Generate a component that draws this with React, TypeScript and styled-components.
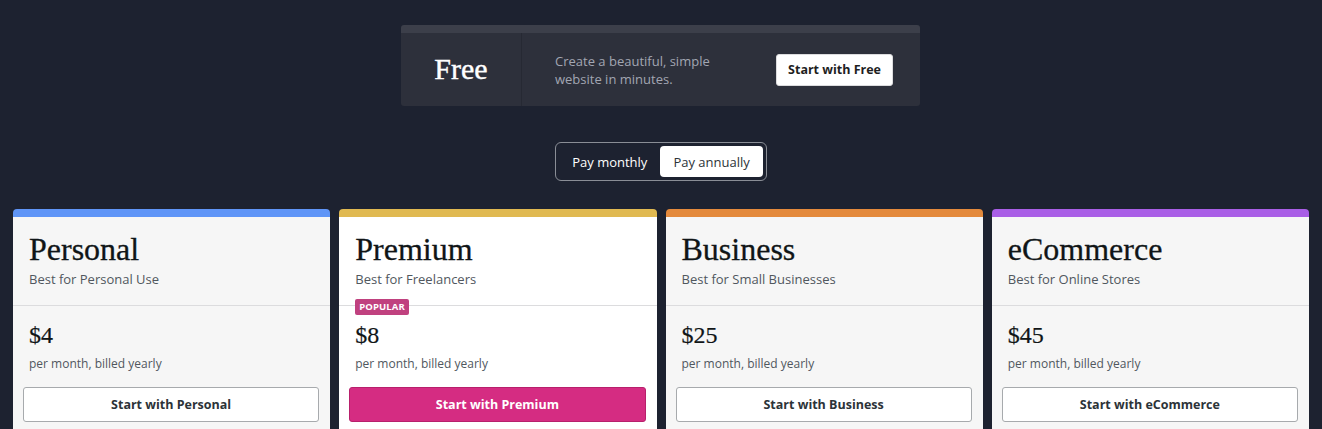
import React from "react";
import styled, { createGlobalStyle } from "styled-components";

const Global = createGlobalStyle`
  html, body { margin: 0; padding: 0; background: #1d2230; }
  body { font-family: "Open Sans", "Noto Sans", sans-serif; -webkit-font-smoothing: antialiased; }
  * { box-sizing: border-box; }
`;

const Page = styled.div`
  min-height: 429px;
  background: #1d2230;
  padding: 25px 13px 40px;
  display: flex;
  flex-direction: column;
  align-items: center;
`;

const FreeBanner = styled.div`
  width: 519px;
  height: 81px;
  margin-right: 1px;
  background: #2d303b;
  border-top: 8px solid #3c3f4a;
  border-radius: 3px;
  display: flex;
  align-items: stretch;
`;

const FreeName = styled.div`
  width: 121px;
  flex: 0 0 121px;
  border-right: 1px solid #262933;
  display: flex;
  align-items: center;
  justify-content: center;
  font-family: "Liberation Serif", "Times New Roman", serif;
  font-size: 30px;
  font-weight: 400;
  -webkit-text-stroke: 0.4px #ffffff;
  color: #ffffff;
  padding-bottom: 1px;
`;

const FreeBody = styled.div`
  flex: 1;
  display: flex;
  align-items: center;
  justify-content: space-between;
  padding: 0 27px 0 33px;
`;

const FreeText = styled.p`
  margin: 0;
  font-size: 13px;
  line-height: 18px;
  color: #a2a6b2;
`;

const LightButton = styled.button`
  height: 32px;
  padding: 0 11px;
  background: #ffffff;
  border: 1px solid #dcdcde;
  border-radius: 3px;
  font-family: "Open Sans", sans-serif;
  font-weight: 700;
  font-size: 12.5px;
  color: #1e1e1e;
  cursor: pointer;
`;

const Toggle = styled.div`
  margin-top: 36px;
  display: flex;
  padding: 3px;
  border: 1px solid #8a8e96;
  border-radius: 6px;
  height: 39px;
`;

const ToggleOption = styled.button<{ $active?: boolean }>`
  height: 31px;
  padding: 0 13px;
  border: none;
  border-radius: 4px;
  font-family: "Open Sans", sans-serif;
  font-size: 13px;
  background: ${(p) => (p.$active ? "#ffffff" : "transparent")};
  color: ${(p) => (p.$active ? "#2c3338" : "#ffffff")};
  cursor: pointer;
`;

const Cards = styled.div`
  margin-top: 28px;
  width: 100%;
  display: grid;
  grid-template-columns: repeat(4, 1fr);
  column-gap: 9px;
`;

const Card = styled.div<{ $accent: string; $featured?: boolean }>`
  background: ${(p) => (p.$featured ? "#ffffff" : "#f6f6f6")};
  border-top: 8px solid ${(p) => p.$accent};
  border-radius: 4px;
  display: flex;
  flex-direction: column;
`;

const CardHead = styled.div`
  padding: 13px 16px 17px;
  border-bottom: 1px solid #dcdcde;
  position: relative;
`;

const PlanName = styled.h2`
  margin: 0;
  font-family: "Liberation Serif", "Times New Roman", serif;
  font-weight: 400;
  font-size: 32px;
  line-height: 38px;
  color: #101517;
  -webkit-text-stroke: 0.3px #101517;
`;

const PlanTag = styled.div`
  margin-top: 2px;
  font-size: 13px;
  line-height: 18px;
  color: #50575e;
`;

const Badge = styled.span`
  position: absolute;
  left: 16px;
  bottom: -10px;
  padding: 0 4px;
  height: 16px;
  line-height: 16px;
  background: #c0417f;
  color: #ffffff;
  font-size: 9.5px;
  font-weight: 700;
  letter-spacing: 0.1px;
  border-radius: 2px;
`;

const CardBody = styled.div`
  padding: 16px 16px 16px;
`;

const Price = styled.div`
  font-family: "Liberation Serif", "Times New Roman", serif;
  font-size: 24px;
  line-height: 26px;
  color: #101517;
  -webkit-text-stroke: 0.2px #101517;
`;

const Billing = styled.div`
  margin-top: 8px;
  font-size: 12px;
  line-height: 16px;
  color: #50575e;
`;

const CtaRow = styled.div`
  margin: 15px -5px 0 -6px;
`;

const Cta = styled.button<{ $primary?: boolean }>`
  width: 100%;
  height: 35px;
  border-radius: 3px;
  border: 1px solid ${(p) => (p.$primary ? "#b8206c" : "#a7aaad")};
  background: ${(p) => (p.$primary ? "#d52c82" : "#ffffff")};
  color: ${(p) => (p.$primary ? "#ffffff" : "#2c3338")};
  font-family: "Open Sans", sans-serif;
  font-weight: 700;
  font-size: 12.5px;
  cursor: pointer;
`;

const plans = [
  { name: "Personal", tag: "Best for Personal Use", price: "$4", accent: "#5f95f7" },
  { name: "Premium", tag: "Best for Freelancers", price: "$8", accent: "#e0b951", featured: true },
  { name: "Business", tag: "Best for Small Businesses", price: "$25", accent: "#e48a3c" },
  { name: "eCommerce", tag: "Best for Online Stores", price: "$45", accent: "#a95ee6" },
];

export default function App() {
  return (
    <>
      <Global />
      <Page>
        <FreeBanner>
          <FreeName>Free</FreeName>
          <FreeBody>
            <FreeText>
              Create a beautiful, simple
              <br />
              website in minutes.
            </FreeText>
            <LightButton>Start with Free</LightButton>
          </FreeBody>
        </FreeBanner>
        <Toggle>
          <ToggleOption>Pay monthly</ToggleOption>
          <ToggleOption $active>Pay annually</ToggleOption>
        </Toggle>
        <Cards>
          {plans.map((p) => (
            <Card key={p.name} $accent={p.accent} $featured={p.featured}>
              <CardHead>
                <PlanName>{p.name}</PlanName>
                <PlanTag>{p.tag}</PlanTag>
                {p.featured && <Badge>POPULAR</Badge>}
              </CardHead>
              <CardBody>
                <Price>{p.price}</Price>
                <Billing>per month, billed yearly</Billing>
                <CtaRow>
                  <Cta $primary={p.featured}>Start with {p.name}</Cta>
                </CtaRow>
              </CardBody>
            </Card>
          ))}
        </Cards>
      </Page>
    </>
  );
}
